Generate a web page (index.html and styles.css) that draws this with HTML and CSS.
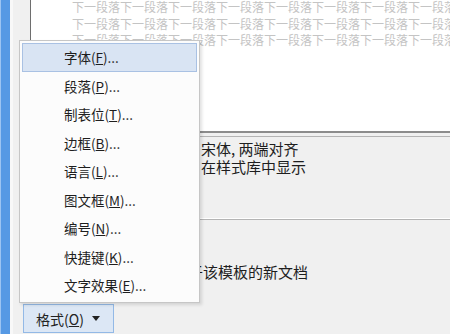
FILE: index.html
```html
<!doctype html>
<html lang="zh-CN">
<head>
    <meta charset="UTF-8">
    <title>修改样式</title>
    <link rel="stylesheet" href="styles.css">
</head>
<body>
<div class="window">
    <div class="frame"></div>
    <div class="dialog">
        <div class="preview">
            <p>下一段落下一段落下一段落下一段落下一段落下一段落下一段落下一段落</p>
            <p>下一段落下一段落下一段落下一段落下一段落下一段落下一段落下一段落</p>
            <p>下一段落下一段落下一段落下一段落下一段落下一段落下一段落下一段落</p>
        </div>
        <div class="desc">
            <p>宋体, 两端对齐</p>
            <p>在样式库中显示</p>
        </div>
        <div class="options">
            <p class="option">基于该模板的新文档</p>
        </div>
        <div class="actions">
            <button class="format_btn">格式(<u>O</u>) <span class="arrow"></span></button>
        </div>
    </div>
</div>

<ul class="menu">
    <li class="menu_item menu_item-active">字体(<u>F</u>)...</li>
    <li class="menu_item">段落(<u>P</u>)...</li>
    <li class="menu_item">制表位(<u>T</u>)...</li>
    <li class="menu_item">边框(<u>B</u>)...</li>
    <li class="menu_item">语言(<u>L</u>)...</li>
    <li class="menu_item">图文框(<u>M</u>)...</li>
    <li class="menu_item">编号(<u>N</u>)...</li>
    <li class="menu_item">快捷键(<u>K</u>)...</li>
    <li class="menu_item">文字效果(<u>E</u>)...</li>
</ul>
</body>
</html>
```

FILE: styles.css
```css
body {
    margin: 0;
    padding: 0;
    width: 450px;
    height: 334px;
    overflow: hidden;
    background: #f0f0f0;
    font-family: "Noto Sans CJK SC", "Liberation Sans", sans-serif;
    color: #222;
}

p {
    margin: 0;
}

.window {
    display: flex;
    height: 334px;
}

.frame {
    width: 9px;
    border-left: 1px solid #9cc4f2;
    background: #5699e4;
}

.dialog {
    flex: 1;
    display: flex;
    flex-direction: column;
    padding-left: 10px;
    border-left: 3px solid #f8f8f8;
    background: #f0f0f0;
    min-width: 0;
}

.preview {
    margin-left: 7px;
    height: 131px;
    padding-left: 41px;
    background: #fff;
    border-left: 1px solid #6e6e6e;
    border-bottom: 2px solid #8c8c8c;
    overflow: hidden;
    white-space: nowrap;
    font-size: 12px;
    line-height: 16.5px;
    color: #c4c4c4;
}

.preview p:first-child {
    margin-top: -1px;
}

.desc {
    margin: 3px 0 0 7px;
    height: 84px;
    padding: 3px 0 0 171px;
    box-sizing: border-box;
    border-top: 1px solid #b4b4b4;
    border-bottom: 1px solid #b4b4b4;
    box-shadow: inset 0 -1px 0 #fff;
    font-size: 15px;
    line-height: 18px;
    color: #1e1e1e;
}

.options {
    height: 84px;
    padding: 43px 0 0 150px;
    box-sizing: border-box;
    font-size: 15px;
    line-height: 18px;
    color: #1e1e1e;
}

.format_btn {
    display: flex;
    align-items: center;
    width: 91px;
    height: 29px;
    padding: 0 0 0 12px;
    margin: 0;
    background: #dce7f5;
    border: 1px solid #93b9e6;
    font-family: "Noto Sans CJK SC", "Liberation Sans", sans-serif;
    font-size: 14px;
    color: #222;
}

.arrow {
    display: inline-block;
    margin-left: 8px;
    border-left: 4px solid transparent;
    border-right: 4px solid transparent;
    border-top: 5px solid #222;
}

.menu {
    position: absolute;
    left: 19px;
    top: 40px;
    width: 175px;
    margin: 0;
    padding: 2px;
    list-style: none;
    background: #fcfcfc;
    border: 1px solid #c6c6c6;
    box-shadow: 2px 2px 3px rgba(0, 0, 0, 0.12);
}

.menu_item {
    height: 28.5px;
    padding-left: 41px;
    border: 1px solid transparent;
    box-sizing: border-box;
    font-size: 13.5px;
    line-height: 26px;
    color: #1e1e1e;
}

.menu_item-active {
    background: #d9e4f3;
    border-color: #a9c1e3;
}
```
